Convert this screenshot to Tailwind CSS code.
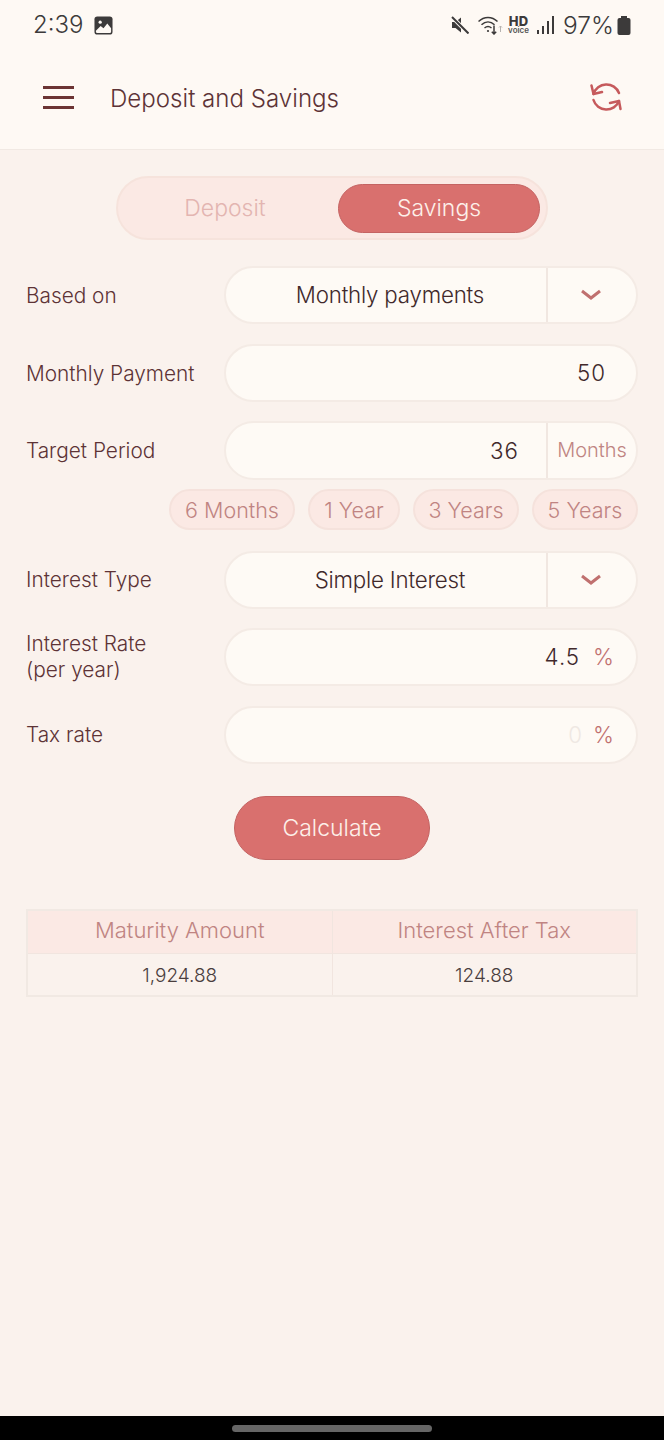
<!DOCTYPE html>
<html lang="en">
<head>
<meta charset="UTF-8">
<meta name="viewport" content="width=device-width, initial-scale=1.0">
<title>Deposit and Savings</title>
<script src="https://cdn.jsdelivr.net/npm/@tailwindcss/browser@4"></script>
</head>
<body class="font-['Inter',sans-serif] bg-[#faf2ed]">
<div class="w-[664px] h-[1440px] flex flex-col overflow-hidden">

  <!-- status bar + app bar -->
  <header class="h-[150px] shrink-0 bg-[#fef9f4] border-b border-[#f1e9e3]">
    <div class="h-[50px] flex items-center pl-[33px] pr-[33px] text-[#3c3a3a]">
      <span class="text-[24px] font-light leading-none">2:39</span>
      <svg class="ml-[11px] w-[19px] h-[19px]" viewBox="0 0 20 20"><rect x="0.5" y="0.5" width="19" height="19" rx="3" fill="#3c3a3a"/><circle cx="6.5" cy="6.5" r="1.7" fill="#fef9f4"/><path d="M2 15.500l5-5 3 2.500 4-5 4 5V16.500a1.500 1.500 0 0 1-1.500 1.500h-13A1.500 1.500 0 0 1 2 16.500z" fill="#fef9f4"/></svg>
      <div class="ml-auto flex items-center">
        <svg class="w-[18px] h-[18px]" viewBox="0 0 18 18"><path d="M1 6h3.500L10 1.500v15L4.500 12H1z" fill="#3c3a3a"/><path d="M1 1L17.500 17.500" stroke="#fef9f4" stroke-width="4"/><path d="M1 1l16.500 16.500" stroke="#3c3a3a" stroke-width="2"/></svg>
        <svg class="ml-[9px] w-[25px] h-[20px]" viewBox="0 0 25 20" fill="none" stroke="#3c3a3a" stroke-width="1.500"><path d="M0.500 6.500C6 1 14 1 19.500 6.500"/><path d="M3.500 9.800c4-3.800 9-3.800 13 0"/><path d="M6.500 13c2.500-2 4.500-2 7 0"/><circle cx="10" cy="16" r="1.100" fill="#3c3a3a" stroke="none"/><path d="M16 10.500v8.500M13.800 16.800l2.200 2.200 2.200-2.200"/><path d="M22.500 17v-6M21 12.500l1.500-1.500 1.500 1.500" stroke="#b5b2af" stroke-width="1"/></svg>
        <div class="ml-[5px] w-[21px] flex flex-col items-center text-[#3c3a3a] leading-none">
          <span class="text-[13px] font-extrabold h-[11px] leading-[11px] tracking-[0.3px]">HD</span>
          <span class="text-[8px] font-semibold h-[7px] leading-[7px] text-[#555555]">voice</span>
        </div>
        <svg class="ml-[8px] w-[17px] h-[18px]" viewBox="0 0 17 18" fill="#3c3a3a"><rect x="0" y="14" width="2" height="4"/><rect x="5" y="10" width="2" height="8"/><rect x="10" y="5" width="2" height="13"/><rect x="15" y="0" width="2" height="18"/></svg>
        <span class="ml-[9px] text-[24.500px] font-light leading-none">97%</span>
        <svg class="ml-[3px] w-[14px] h-[19px]" viewBox="0 0 14 19" fill="#3c3a3a"><rect x="4" y="0" width="6" height="2"/><rect x="0.500" y="2" width="13" height="17" rx="2"/></svg>
      </div>
    </div>
    <div class="h-[99px] flex items-center pb-[4px]">
      <div class="ml-[43px] w-[31px] flex flex-col gap-[7px]">
        <span class="block h-[3px] bg-[#6c3434]"></span>
        <span class="block h-[3px] bg-[#6c3434]"></span>
        <span class="block h-[3px] bg-[#6c3434]"></span>
      </div>
      <h1 class="ml-[36px] mt-[4px] text-[24.100px] font-[350] leading-none text-[#5d3336]">Deposit and Savings</h1>
      <svg class="ml-auto mr-[41px] w-[33px] h-[33px]" viewBox="0 0 33 33" fill="none" stroke="#c65a5c" stroke-width="2.500" stroke-linecap="round" stroke-linejoin="round"><path d="M1.500 4.500L3.500 13l8.500-2"/><path d="M3.500 13A13.500 13.500 0 0 1 29 12"/><path d="M30.500 28L29 20l-9 2"/><path d="M29 20A13.500 13.500 0 0 1 3.500 19"/></svg>
    </div>
  </header>

  <main class="flex-1 px-[26px] font-[350]">
    <!-- tabs -->
    <div class="mt-[26px] ml-[90px] w-[432px] h-[64px] rounded-full bg-[#fbe9e4] border-2 border-[#f6e3dc] flex items-center pr-[6px] text-[23px]">
      <div class="w-[214px] text-center text-[#e3b5b1]">Deposit</div>
      <div class="ml-auto w-[202px] h-[49px] rounded-full bg-[#d9706e] border border-[#c46362] flex items-center justify-center text-[#fdf0ea]">Savings</div>
    </div>

    <!-- form rows -->
    <div class="mt-[26px] flex items-center h-[58px]">
      <label class="w-[198px] pt-[2px] text-[20.800px] text-[#5d3336]">Based on</label>
      <div class="flex-1 h-full rounded-full bg-[#fefaf5] border-2 border-[#f4ebe5] flex items-center">
        <div class="flex-1 pl-[8px] text-center text-[22.300px] text-[#41292b] tracking-[-0.2px]">Monthly payments</div>
        <div class="w-[90px] h-full pr-[3px] border-l-2 border-[#f1e7e1] flex items-center justify-center">
          <svg class="w-[22px] h-[12px]" viewBox="0 0 22 12" fill="none" stroke="#c0706f" stroke-width="3"><path d="M2 2l9 7 9-7"/></svg>
        </div>
      </div>
    </div>

    <div class="mt-[20px] flex items-center h-[58px]">
      <label class="w-[198px] pt-[2px] text-[20.800px] text-[#5d3336]">Monthly Payment</label>
      <div class="flex-1 h-full rounded-full bg-[#fefaf5] border-2 border-[#f4ebe5] flex items-center justify-end pr-[30px] text-[22.300px] text-[#41292b] tracking-[1px]">50</div>
    </div>

    <div class="mt-[19px] flex items-center h-[59px]">
      <label class="w-[198px] text-[20.800px] text-[#5d3336]">Target Period</label>
      <div class="flex-1 h-full rounded-full bg-[#fefaf5] border-2 border-[#f4ebe5] flex items-center">
        <div class="flex-1 text-right pr-[27px] text-[22.300px] text-[#41292b] tracking-[1px]">36</div>
        <div class="w-[90px] h-full pb-[2px] border-l-2 border-[#f1e7e1] flex items-center justify-center text-[20px] text-[#c08482]">Months</div>
      </div>
    </div>

    <div class="mt-[9px] flex justify-end gap-[13px] text-[21.500px] text-[#c08482]">
      <button class="h-[41px] w-[126px] pt-[2px] rounded-full bg-[#fbe9e4] border-2 border-[#f5e2dc]">6 Months</button>
      <button class="h-[41px] w-[92px] pt-[2px] rounded-full bg-[#fbe9e4] border-2 border-[#f5e2dc]">1 Year</button>
      <button class="h-[41px] w-[106px] pt-[2px] rounded-full bg-[#fbe9e4] border-2 border-[#f5e2dc]">3 Years</button>
      <button class="h-[41px] w-[106px] pt-[2px] rounded-full bg-[#fbe9e4] border-2 border-[#f5e2dc]">5 Years</button>
    </div>

    <div class="mt-[21px] flex items-center h-[58px]">
      <label class="w-[198px] text-[20.800px] text-[#5d3336]">Interest Type</label>
      <div class="flex-1 h-full rounded-full bg-[#fefaf5] border-2 border-[#f4ebe5] flex items-center">
        <div class="flex-1 pl-[8px] text-center text-[22.300px] text-[#41292b] tracking-[-0.2px]">Simple Interest</div>
        <div class="w-[90px] h-full pr-[3px] border-l-2 border-[#f1e7e1] flex items-center justify-center">
          <svg class="w-[22px] h-[12px]" viewBox="0 0 22 12" fill="none" stroke="#c0706f" stroke-width="3"><path d="M2 2l9 7 9-7"/></svg>
        </div>
      </div>
    </div>

    <div class="mt-[19px] flex items-center h-[58px]">
      <label class="w-[198px] text-[20.800px] leading-[26px] text-[#5d3336]">Interest Rate<br>(per year)</label>
      <div class="flex-1 h-full rounded-full bg-[#fefaf5] border-2 border-[#f4ebe5] flex items-center justify-end pr-[22px] text-[22.300px] text-[#41292b]">
        <span class="tracking-[1px]">4.5</span><span class="ml-[13px] text-[#c0706f]">%</span>
      </div>
    </div>

    <div class="mt-[20px] flex items-center h-[58px]">
      <label class="w-[198px] text-[20.800px] text-[#5d3336]">Tax rate</label>
      <div class="flex-1 h-full rounded-full bg-[#fefaf5] border-2 border-[#f4ebe5] flex items-center justify-end pr-[22px] text-[22.300px]">
        <span class="text-[#efe8e3]">0</span><span class="ml-[11px] text-[#c0706f]">%</span>
      </div>
    </div>

    <button class="block mt-[32px] mx-auto w-[196px] h-[64px] rounded-full bg-[#d9706e] border border-[#c46362] text-[23px] text-[#fdf0ea]">Calculate</button>

    <!-- results -->
    <table class="mt-[49px] w-[612px] table-fixed border-collapse border-2 border-[#f1e9e3]">
      <thead>
        <tr class="h-[43px] bg-[#fbe9e4]">
          <th class="pb-[3px] font-[350] text-[22px] text-[#c08482] border-r border-[#f1e5df] border-b">Maturity Amount</th>
          <th class="pb-[3px] font-[350] text-[22px] text-[#c08482] border-b border-[#f1e5df]">Interest After Tax</th>
        </tr>
      </thead>
      <tbody>
        <tr class="h-[43px]">
          <td class="pt-[4px] text-center text-[19px] text-[#4a3e3e] border-r border-[#f1e5df]">1,924.88</td>
          <td class="pt-[4px] text-center text-[19px] text-[#4a3e3e]">124.88</td>
        </tr>
      </tbody>
    </table>
  </main>

  <!-- nav bar -->
  <div class="h-[24px] shrink-0 bg-black flex items-center justify-center">
    <span class="block w-[200px] h-[7px] rounded-full bg-[#666666]"></span>
  </div>
</div>
</body>
</html>
